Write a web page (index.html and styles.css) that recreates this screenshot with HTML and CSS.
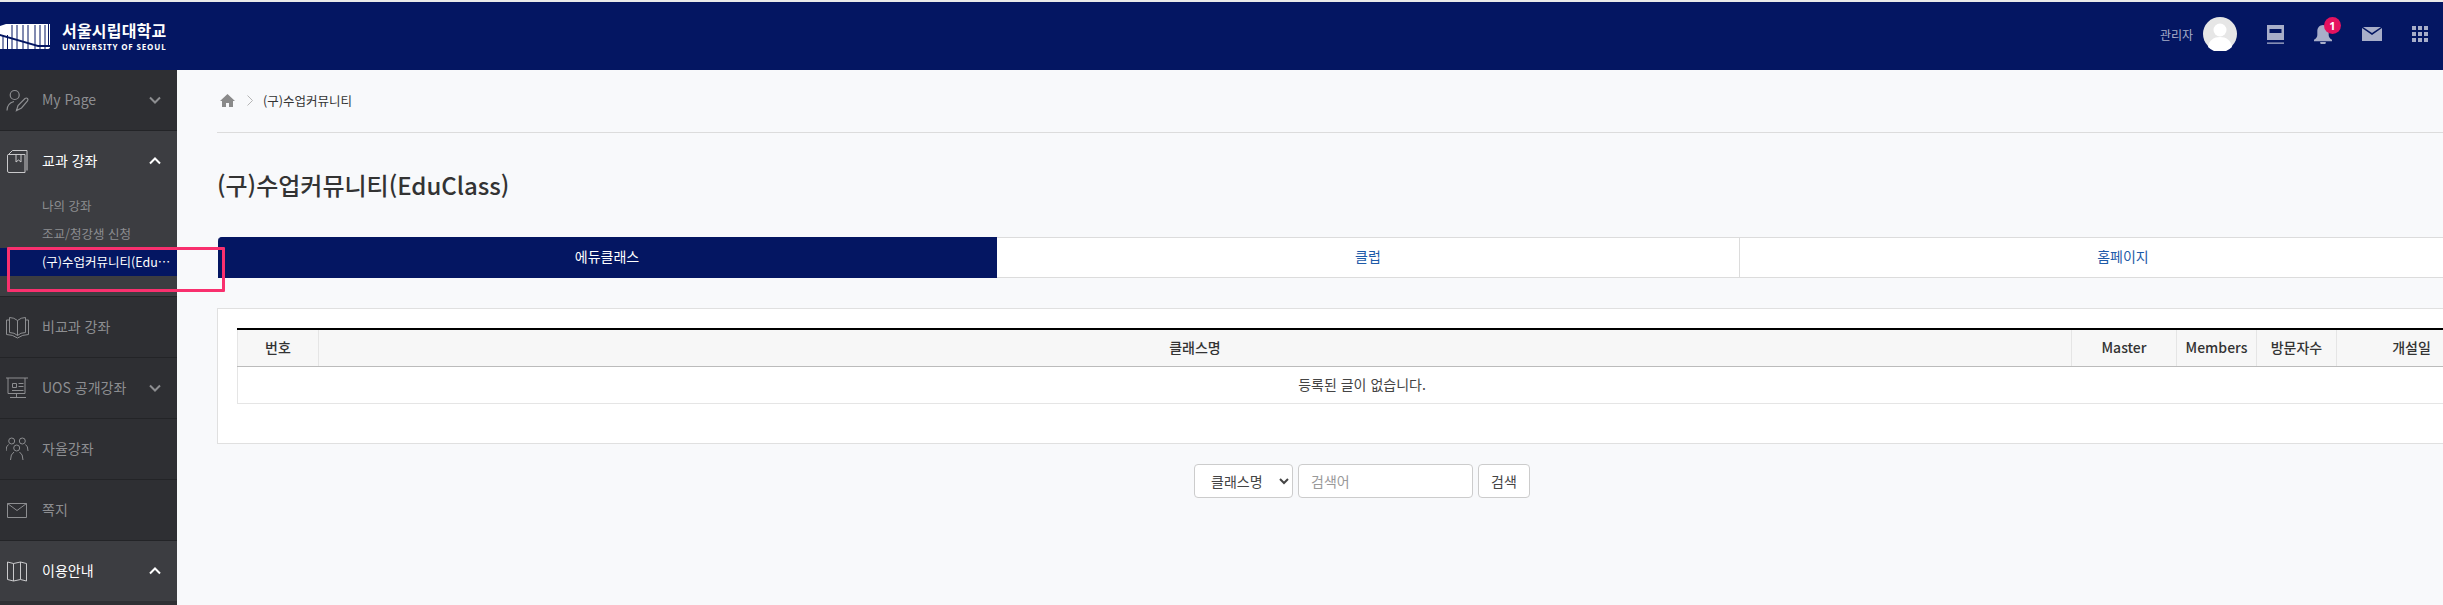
FILE: index.html
```html
<!DOCTYPE html>
<html lang="ko">
<head>
<meta charset="utf-8">
<title>(구)수업커뮤니티(EduClass)</title>
<link rel="stylesheet" href="styles.css">
</head>
<body>
<div class="page">
  <header class="topbar">
    <div class="logo">
      <svg class="logo-mark" width="51" height="26" viewBox="0 0 51 26">
        <path fill="#fff" d="M0 3L6 1H50V22H38L0 11z"/>
        <path fill="#fff" d="M0 13L38 24H50Q50 26 47 26H0z"/>
        <path fill="none" stroke="#041662" stroke-width="1" d="M3 12V26M7.500 12V26M12 2V26M17 2V26M23 2V26M28 2V26M35 2V26M40 2V26M45 2V26M48.500 1V24"/>
      </svg>
      <div class="logo-text">
        <span class="logo-ko">서울시립대학교</span>
        <span class="logo-en">UNIVERSITY OF SEOUL</span>
      </div>
    </div>
    <div class="top-actions">
      <span class="user-name">관리자</span>
      <svg class="avatar" width="34" height="34" viewBox="0 0 34 34">
        <circle cx="17" cy="17" r="17" fill="#e6e6e6"/>
        <circle cx="17" cy="13" r="6.500" fill="#fff"/>
        <path d="M5 30c1-7 6-10 12-10s11 3 12 10a17 17 0 0 1-24 0z" fill="#fff"/>
      </svg>
      <svg class="top-icon book-icon" width="17" height="19" viewBox="0 0 17 19">
        <path d="M0 0h17v15H0zM2.500 4v4h12V4z" fill-rule="evenodd" fill="#a8aec9"/>
        <path d="M0 17.500h17v1.300H0z" fill="#a8aec9"/>
      </svg>
      <span class="bell">
        <svg width="18" height="19" viewBox="0 0 19 20">
          <path d="M9.500 0c3.500 0 6 3 6 6.500v4c0 2 1 3.500 3.500 5v1.500H0v-1.500c2.500-1.500 3.500-3 3.500-5v-4C3.500 3 6 0 9.500 0zM6.500 18h6a3 3 0 0 1-6 0z" fill="#a8aec9"/>
        </svg>
        <span class="badge">1</span>
      </span>
      <svg class="top-icon mail-icon" width="20" height="14" viewBox="0 0 20 14">
        <path d="M0 1l10 7 10-7v13H0z" fill="#a8aec9"/>
        <path d="M1 0h18l-9 6z" fill="#a8aec9"/>
      </svg>
      <svg class="top-icon grid-icon" width="16" height="16" viewBox="0 0 16 16" fill="#a8aec9">
        <path d="M0 0h4v4H0zM6 0h4v4H6zM12 0h4v4h-4zM0 6h4v4H0zM6 6h4v4H6zM12 6h4v4h-4zM0 12h4v4H0zM6 12h4v4H6zM12 12h4v4h-4z"/>
      </svg>
    </div>
  </header>

  <div class="body-row">
    <nav class="sidebar">
      <div class="menu-item">
        <div class="menu-head">
          <svg class="menu-icon" width="24" height="24" viewBox="0 0 24 24" fill="none" stroke="currentColor" stroke-width="1.200">
            <circle cx="8.700" cy="7" r="4.500"/>
            <path d="M1 22.500c0-5 3-8 7-9M10.500 22.500l1.500-5L19 10.500q1.500-1 2.500 0t0 2.500L15.500 20z"/>
          </svg>
          <span class="menu-label">My Page</span>
          <svg class="chev" width="12" height="8" viewBox="0 0 12 8"><path d="M1 1.500l5 5 5-5" fill="none" stroke="currentColor" stroke-width="2"/></svg>
        </div>
      </div>
      <div class="menu-item open">
        <div class="menu-head">
          <svg class="menu-icon" width="24" height="24" viewBox="0 0 24 24" fill="none" stroke="currentColor" stroke-width="1">
            <path d="M1.500 6.500q0-1 1-1H19V23.500H3q-1.500 0-1.500-1.500zM1.500 6.500L6.500 1.500H21V21.500M10 5.500V13l2.500-2 2.500 2V5.500"/>
          </svg>
          <span class="menu-label">교과 강좌</span>
          <svg class="chev" width="12" height="8" viewBox="0 0 12 8"><path d="M1 6.500l5-5 5 5" fill="none" stroke="currentColor" stroke-width="2"/></svg>
        </div>
        <ul class="submenu">
          <li>나의 강좌</li>
          <li>조교/청강생 신청</li>
          <li class="current">(구)수업커뮤니티(Edu…</li>
        </ul>
      </div>
      <div class="menu-item">
        <div class="menu-head">
          <svg class="menu-icon" width="24" height="24" viewBox="0 0 24 24" fill="none" stroke="currentColor" stroke-width="1">
            <path d="M11.500 5.500q-3.500-3-8-3v15q5 0 8 3 3-3 8-3v-15q-4.500 0-8 3zM11.500 5.500v15M3.500 5H.5v14.500q6 0 11 3.500 5-3.500 11-3.500V5h-3"/>
          </svg>
          <span class="menu-label">비교과 강좌</span>
        </div>
      </div>
      <div class="menu-item">
        <div class="menu-head">
          <svg class="menu-icon" width="24" height="24" viewBox="0 0 24 24" fill="none" stroke="currentColor" stroke-width="1">
            <path d="M0 2h22M2 2v15.500h17V2M6.500 7.500h4v4h-4zM12.500 7.500h5M12.500 10.500h5M6 14.500h11.500M10.500 17.500v4M4 21.500h16"/>
          </svg>
          <span class="menu-label">UOS 공개강좌</span>
          <svg class="chev" width="12" height="8" viewBox="0 0 12 8"><path d="M1 1.500l5 5 5-5" fill="none" stroke="currentColor" stroke-width="2"/></svg>
        </div>
      </div>
      <div class="menu-item">
        <div class="menu-head">
          <svg class="menu-icon" width="24" height="24" viewBox="0 0 24 24" fill="none" stroke="currentColor" stroke-width="1">
            <circle cx="5.700" cy="4" r="3"/><circle cx="16.300" cy="4" r="3"/><circle cx="10.700" cy="11" r="3"/>
            <path d="M0 14q0-5 2.500-6.500M22 14q0-5-2.500-6.500M4.500 23q0-6 3.500-8M17 23q0-6-3.500-8"/>
          </svg>
          <span class="menu-label">자율강좌</span>
        </div>
      </div>
      <div class="menu-item">
        <div class="menu-head">
          <svg class="menu-icon" width="24" height="24" viewBox="0 0 24 24" fill="none" stroke="currentColor" stroke-width="1">
            <path d="M1.500 5.500h19v14h-19zM1.500 5.500l9.500 7 9.500-7"/>
          </svg>
          <span class="menu-label">쪽지</span>
        </div>
      </div>
      <div class="menu-item open last">
        <div class="menu-head">
          <svg class="menu-icon" width="24" height="24" viewBox="0 0 24 24" fill="none" stroke="currentColor" stroke-width="1">
            <path d="M1.500 3l6 1.500 7-1.500 6 1.500V22l-6-1.500-7 1.500-6-1.500zM7.500 4.500V22M14.500 3v17.500"/>
          </svg>
          <span class="menu-label">이용안내</span>
          <svg class="chev" width="12" height="8" viewBox="0 0 12 8"><path d="M1 6.500l5-5 5 5" fill="none" stroke="currentColor" stroke-width="2"/></svg>
        </div>
      </div>
    </nav>

    <main class="content">
      <div class="breadcrumb">
        <svg class="home" width="15" height="13" viewBox="0 0 15 13"><path d="M7.500 0L0 7h2v6h4V9h3v4h4V7h2z" fill="#8a8a8a"/></svg>
        <svg class="crumb-sep" width="6" height="11" viewBox="0 0 6 11"><path d="M.5.500l5 5-5 5" fill="none" stroke="#b5b5b5"/></svg>
        <span class="crumb-text">(구)수업커뮤니티</span>
      </div>
      <h1 class="title">(구)수업커뮤니티(EduClass)</h1>
      <div class="tabs">
        <div class="tab active">에듀클래스</div>
        <div class="tab">클럽</div>
        <div class="tab">홈페이지</div>
      </div>
      <section class="card">
        <table class="board">
          <colgroup>
            <col class="c-no"><col class="c-name"><col class="c-master"><col class="c-members"><col class="c-visit"><col class="c-date">
          </colgroup>
          <thead>
            <tr><th>번호</th><th>클래스명</th><th>Master</th><th>Members</th><th>방문자수</th><th>개설일</th></tr>
          </thead>
          <tbody>
            <tr><td colspan="6">등록된 글이 없습니다.</td></tr>
          </tbody>
        </table>
      </section>
      <form class="search">
        <select class="search-select"><option>클래스명</option></select>
        <input class="search-input" type="text" placeholder="검색어">
        <button class="search-btn" type="button">검색</button>
      </form>
    </main>
  </div>
  <div class="annotation"></div>
</div>
</body>
</html>
```

FILE: styles.css
```css
* { box-sizing: border-box; }
html, body { margin: 0; padding: 0; height: 100%; overflow: hidden; }
body {
  font-family: "Noto Sans CJK KR", "Noto Sans", sans-serif;
  background: #f8f9fb;
  color: #333;
}
.page { position: relative; width: 2443px; height: 605px; overflow: hidden; padding-top: 2px; background: #e9e9e9; }

.topbar {
  height: 68px;
  background: #041662;
  display: flex;
  align-items: center;
  justify-content: space-between;
}
.logo { display: flex; align-items: center; gap: 11px; margin-top: -1px; }
.logo-mark { display: block; }
.logo-text { display: flex; flex-direction: column; color: #fff; }
.logo-ko { font-size: 16px; font-weight: 700; line-height: 20px; letter-spacing: .2px; white-space: nowrap; }
.logo-en { font-size: 8px; font-weight: 700; line-height: 11px; letter-spacing: .85px; font-family: "Noto Sans", sans-serif; white-space: nowrap; margin-top: 1px; }

.top-actions { display: flex; align-items: center; padding: 0 15px 4px 0; color: #a8aec9; }
.user-name { font-size: 12px; margin-right: 10px; }
.avatar { display: block; margin-right: 30px; }
.top-icon { display: block; }
.book-icon { margin-right: 30px; }
.bell { position: relative; display: block; width: 19px; height: 19px; margin-right: 29px; }
.bell svg { display: block; }
.badge {
  position: absolute;
  top: -8px;
  left: 10px;
  width: 17px;
  height: 17px;
  border-radius: 50%;
  background: #e5125f;
  color: #fff;
  font: 700 11px/17px "Noto Sans", sans-serif;
  text-align: center;
}
.mail-icon { margin-right: 30px; }

.body-row { display: flex; height: 535px; background: #f8f9fb; }
.sidebar { width: 177px; flex: none; background: #2e2f33; color: #8d8e91; }
.menu-item { border-bottom: 1px solid #232427; }
.menu-item.open { background: #3c3d41; color: #fff; }
.menu-item.last { border-bottom: 0; }
.menu-head { height: 60px; display: flex; align-items: center; padding: 0 16px 0 6px; }
.menu-icon { flex: none; display: block; color: #8d8e91; }
.open .menu-icon { color: #c9c9cb; }
.menu-label { margin: -2px 0 0 12px; font-size: 14px; flex: 1; white-space: nowrap; }
.chev { flex: none; display: block; color: inherit; }
.submenu { list-style: none; margin: 0; height: 105px; padding: 1px 0 0; color: #8d8e91; font-size: 12.500px; }
.submenu li { height: 28px; line-height: 27px; padding-left: 42px; white-space: nowrap; }
.submenu li.current { background: #041662; color: #fff; }

.content { width: 2330px; flex: none; padding: 0 0 0 40px; }
.breadcrumb { height: 63px; display: flex; align-items: center; padding: 0 0 2px 3px; border-bottom: 1px solid #dcdcdc; }
.home { display: block; }
.crumb-sep { display: block; margin-left: 12px; }
.crumb-text { margin-left: 10px; font-size: 12.500px; color: #333; }
.title { margin: 0; height: 104px; line-height: 104px; font-size: 24px; font-weight: 500; color: #333; }
.tabs { display: grid; grid-template-columns: 779px 743px 1fr; height: 41px; margin-left: 1px; }
.tab { background: #fff; border: 1px solid #dcdcdc; border-left: 0; color: #1d5aa8; font-size: 14px; line-height: 37px; text-align: center; }
.tab.active { background: #041662; border-color: #041662; color: #fff; border-radius: 4px 0 0 0; }

.card { margin-top: 30px; height: 136px; background: #fff; border: 1px solid #e0e0e0; padding: 19px 19px 0; }
.board { width: 100%; border-collapse: collapse; table-layout: fixed; border-top: 2px solid #000; font-size: 14px; }
.c-no { width: 81px; } .c-master { width: 105px; } .c-members { width: 80px; } .c-visit { width: 80px; } .c-date { width: 150px; }
.board th { height: 37px; background: #f7f7f7; border: 1px solid #e5e5e5; border-top: 0; border-bottom: 1px solid #bbb; font-weight: 500; padding: 0 0 2px; color: #333; }
.board td { height: 37px; border: 1px solid #e5e5e5; text-align: center; padding: 0 0 2px; color: #444; font-size: 14px; }

.search { display: flex; justify-content: center; gap: 5px; margin-top: 20px; }
.search-select, .search-input, .search-btn {
  height: 34px;
  border: 1px solid #ccc;
  border-radius: 4px;
  background: #fff;
  font-family: inherit;
  font-size: 14px;
  color: #444;
}
.search-select { width: 99px; padding: 0 0 0 12px; }
.search-input { width: 175px; padding: 0 12px; outline: 0; }
.search-input::placeholder { color: #999; }
.search-btn { width: 52px; padding: 0; }

.annotation {
  position: absolute;
  left: 7px;
  top: 247px;
  width: 218px;
  height: 45px;
  border: 3px solid #f9306e;
  border-radius: 1px;
}
```
